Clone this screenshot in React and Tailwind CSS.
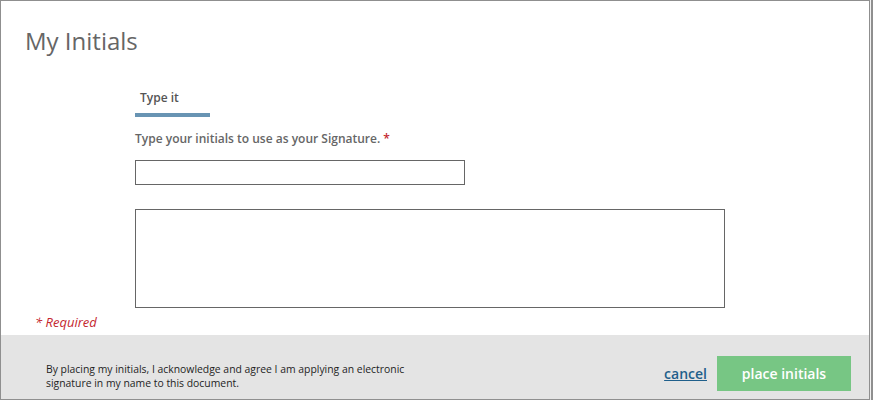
import React from 'react';

function App() {
  return (
    <div
      className="flex w-[873px] h-[400px] bg-[#ececec] overflow-hidden"
      style={{ fontFamily: '"Open Sans", "Liberation Sans", sans-serif' }}
    >
      {/* Dialog */}
      <div className="flex flex-col w-[870px] h-[400px] bg-white border border-[#8f8f8f]">
        <h1 className="ml-[24px] mt-[24px] text-[24px] leading-[32px] font-normal text-[#666666]">
          My Initials
        </h1>

        <div className="ml-[134px] mt-[33px] flex flex-col">
          {/* Tab */}
          <div className="w-[75px]">
            <div className="px-[5px] text-[12px] leading-[16px] font-semibold text-[#555555]">Type it</div>
            <div className="mt-[7px] h-[4px] bg-[#6894b3]" />
          </div>

          <label className="mt-[14px] text-[12px] leading-[16px] font-semibold text-[#666666]">
            Type your initials to use as your Signature. <span className="text-[#c4262e]">*</span>
          </label>

          <input
            type="text"
            className="mt-[13px] w-[330px] h-[25px] border border-[#666666] bg-white outline-none"
          />

          <div className="mt-[24px] w-[590px] h-[99px] border border-[#666666]" />
        </div>

        <div className="ml-[34px] mt-[6px] text-[13px] leading-[16px] italic text-[#c4262e]">* Required</div>

        {/* Footer */}
        <div className="mt-[5px] flex flex-1 items-start justify-between bg-[#e4e4e4]">
          <p className="ml-[45px] mt-[27px] text-[10.4px] leading-[14px] text-[#1e1e1e]">
            By placing my initials, I acknowledge and agree I am applying an electronic
            <br />
            signature in my name to this document.
          </p>
          <div className="flex items-center mt-[21px] mr-[18px]">
            <a href="#" className="text-[14px] font-semibold text-[#1f5f8b] underline">
              cancel
            </a>
            <button className="ml-[10px] w-[134px] h-[35px] bg-[#77c684] text-white text-[14px] font-semibold">
              place initials
            </button>
          </div>
        </div>
      </div>

      {/* Page behind */}
      <div className="w-[1px] bg-[#f2f2f2]" />
      <div className="w-[2px] bg-[#8f8f8f]" />
    </div>
  );
}

export default App;
